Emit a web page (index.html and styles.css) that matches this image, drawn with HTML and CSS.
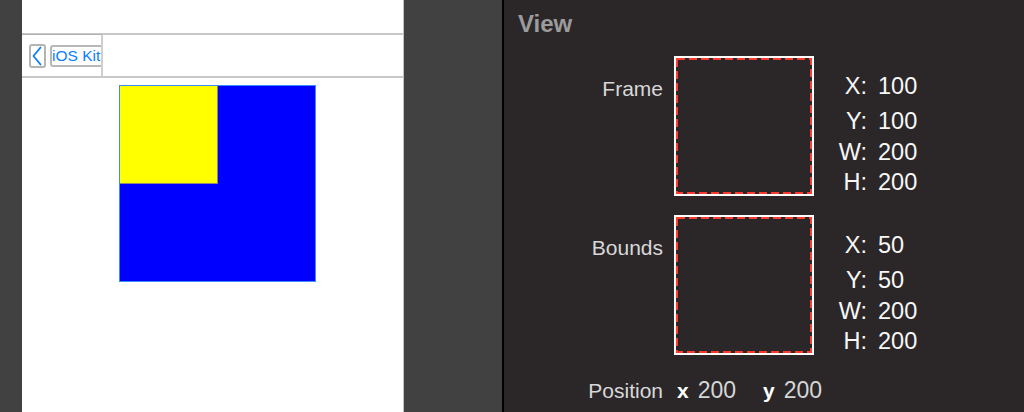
FILE: index.html
```html
<!DOCTYPE html>
<html lang="en">
<head>
<meta charset="utf-8">
<title>View Frame and Bounds</title>
<link rel="stylesheet" href="styles.css">
</head>
<body>
<div class="app">
  <div class="gutter-left"></div>
  <section class="phone">
    <div class="status"></div>
    <nav class="navbar">
      <div class="nav-left">
        <div class="back-btn">
          <svg width="13" height="20" viewBox="0 0 13 20"><polyline points="9.5,1.5 2.5,10 9.5,18.5" fill="none" stroke="#0a7cff" stroke-width="1.8" stroke-linejoin="round" stroke-linecap="round"/></svg>
        </div>
        <div class="nav-title">iOS Kit</div>
      </div>
    </nav>
    <div class="canvas">
      <div class="blue-view">
        <div class="yellow-view"></div>
      </div>
    </div>
  </section>
  <div class="gutter-mid"></div>
  <section class="inspector">
    <h1 class="title">View</h1>
    <div class="row row-frame">
      <div class="label">Frame</div>
      <div class="box">
        <svg width="136" height="136" viewBox="0 0 136 136"><rect x="1" y="1" width="134" height="134" fill="none" stroke="#ff3b30" stroke-width="2" stroke-dasharray="8 4"/></svg>
      </div>
      <div class="values">
        <span class="k">X:</span><span class="v">100</span>
        <span class="k">Y:</span><span class="v">100</span>
        <span class="k">W:</span><span class="v">200</span>
        <span class="k">H:</span><span class="v">200</span>
      </div>
    </div>
    <div class="row row-bounds">
      <div class="label">Bounds</div>
      <div class="box">
        <svg width="136" height="136" viewBox="0 0 136 136"><rect x="1" y="1" width="134" height="134" fill="none" stroke="#ff3b30" stroke-width="2" stroke-dasharray="8 4"/></svg>
      </div>
      <div class="values">
        <span class="k">X:</span><span class="v">50</span>
        <span class="k">Y:</span><span class="v">50</span>
        <span class="k">W:</span><span class="v">200</span>
        <span class="k">H:</span><span class="v">200</span>
      </div>
    </div>
    <div class="position">
      <span class="label">Position</span>
      <span class="axis axis-x">x</span><span class="num">200</span>
      <span class="axis axis-y">y</span><span class="num">200</span>
    </div>
  </section>
</div>
</body>
</html>
```
FILE: styles.css
```css
* { box-sizing: border-box; }
html, body {
  margin: 0;
  padding: 0;
  width: 1024px;
  height: 412px;
  overflow: hidden;
  background: #414141;
  font-family: "Liberation Sans", Arial, sans-serif;
}
.app {
  display: flex;
  width: 1024px;
  height: 412px;
}
.gutter-left {
  width: 22px;
  flex: none;
  background: #414141;
}
.phone {
  width: 382px;
  flex: none;
  background: #ffffff;
  border-right: 1px solid #c2c2c2;
  display: flex;
  flex-direction: column;
}
.status {
  height: 35px;
  border-bottom: 2px solid #c8c8c8;
}
.navbar {
  height: 43px;
  border-bottom: 2px solid #c8c8c8;
  display: flex;
}
.nav-left {
  width: 81px;
  border-right: 2px solid #cfcfcf;
  border-top: 1px solid #b0b0b0;
  margin-top: -1px;
  display: flex;
  align-items: center;
  padding-left: 7px;
}
.back-btn {
  width: 17px;
  height: 24px;
  border: 2px solid #b4b4b4;
  border-radius: 3px;
  display: flex;
  align-items: center;
  justify-content: center;
  margin-top: 1px;
}
.nav-title {
  margin-left: 4px;
  flex: 1;
  height: 22px;
  border: 2px solid #b8b8b8;
  border-right: none;
  border-radius: 3px 0 0 3px;
  color: #0a7cff;
  font-size: 15.5px;
  line-height: 18px;
  white-space: nowrap;
  overflow: hidden;
  padding-left: 0;
  margin-top: 1px;
}
.canvas {
  flex: 1;
  padding-top: 7px;
  padding-left: 97px;
}
.blue-view {
  width: 197px;
  height: 197px;
  background: #0000ff;
  border: 1px solid #3b8cff;
}
.yellow-view {
  width: 98px;
  height: 98px;
  background: #ffff00;
  border-right: 1px solid #8c8c70;
  border-bottom: 1px solid #8c8c70;
}
.gutter-mid {
  width: 98px;
  flex: none;
  background: #414141;
}
.inspector {
  flex: 1;
  background: #2b2729;
  border-left: 2px solid #000000;
  padding-top: 12px;
}
.title {
  margin: 0;
  padding-left: 14px;
  font-size: 24px;
  line-height: 24px;
  font-weight: bold;
  color: #9c9c9c;
}
.row {
  display: flex;
  align-items: flex-start;
}
.row-frame { margin-top: 20px; }
.row-bounds { margin-top: 18px; }
.label {
  width: 159px;
  flex: none;
  text-align: right;
  font-size: 21px;
  line-height: 24px;
  color: #d8d8d8;
}
.row .label { margin-top: 21px; }
.box {
  margin-left: 11px;
  width: 140px;
  height: 140px;
  border: 2px solid #ffffff;
  flex: none;
}
.box svg { display: block; }
.values {
  display: grid;
  grid-template-columns: 53px auto;
  grid-template-rows: 35px 31px 30px 30px;
  column-gap: 11px;
  padding-top: 15px;
  font-size: 23.5px;
  line-height: 30px;
  color: #f7f7f7;
}
.values .k { text-align: right; }
.position {
  margin-top: 22px;
  display: flex;
  align-items: baseline;
  font-size: 23px;
  line-height: 24px;
}
.position .label { margin-top: 0; }
.axis {
  color: #ffffff;
  font-weight: bold;
  font-size: 21px;
}
.axis-x { margin-left: 14px; }
.axis-y { margin-left: 27px; }
.num {
  margin-left: 9px;
  color: #d6d6d6;
}
```
